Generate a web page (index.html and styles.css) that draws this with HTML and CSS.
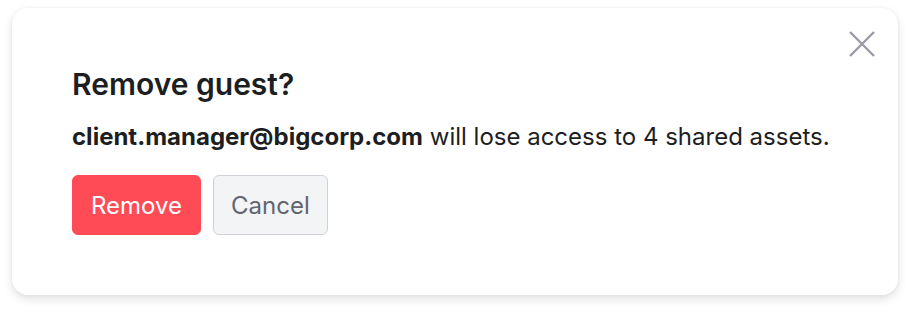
FILE: index.html
```html
<!DOCTYPE html>
<html lang="en">
  <head>
    <meta charset="UTF-8" />
    <meta name="viewport" content="width=device-width, initial-scale=1.0" />
    <title>Remove guest</title>
    <link rel="stylesheet" href="styles.css">
  </head>
  <body>
    <div class="dialog">
      <button class="close" aria-label="Close">
        <svg viewBox="0 0 28 28" width="28" height="28">
          <path d="M2 2L26 26M26 2L2 26" />
        </svg>
      </button>
      <h2 class="title">Remove guest?</h2>
      <p class="message"><strong>client.manager@bigcorp.com</strong> will lose access to 4 shared assets.</p>
      <div class="actions">
        <button class="btn btn_danger">Remove</button>
        <button class="btn btn_cancel">Cancel</button>
      </div>
    </div>
  </body>
</html>
```

FILE: styles.css
```css
* {
  box-sizing: border-box;
  padding: 0;
  margin: 0;
}
body {
  background: #fff;
  font-family: Inter, "Noto Sans", sans-serif;
  padding: 8px 13px 17px 12px;
}
.dialog {
  position: relative;
  height: 287px;
  background: #fff;
  border-radius: 16px;
  box-shadow: 0 0 3px rgba(0, 0, 0, 0.06), 0 4px 10px rgba(0, 0, 0, 0.12);
  padding: 58px 60px 0;
}
.close {
  position: absolute;
  top: 22px;
  right: 22px;
  background: none;
  border: none;
  cursor: pointer;
}
.close svg {
  display: block;
  stroke: #9a9ba6;
  stroke-width: 2.4;
  fill: none;
}
.title {
  font-size: 30px;
  font-weight: 600;
  line-height: 36px;
  color: #1d1e22;
}
.message {
  margin-top: 19px;
  font-size: 24px;
  line-height: 32px;
  color: #1d1e22;
}
.message strong {
  font-weight: 700;
}
.actions {
  display: flex;
  gap: 12px;
  margin-top: 22px;
}
.btn {
  height: 60px;
  padding: 0 18px;
  border-radius: 6px;
  font-family: inherit;
  font-size: 24px;
  cursor: pointer;
}
.btn_danger {
  background: #ff4b55;
  border: 1px solid #ff4b55;
  color: #fff;
}
.btn_cancel {
  padding: 0 17px;
  background: #f3f4f6;
  border: 1px solid #cfd1d7;
  color: #62646f;
}
```
